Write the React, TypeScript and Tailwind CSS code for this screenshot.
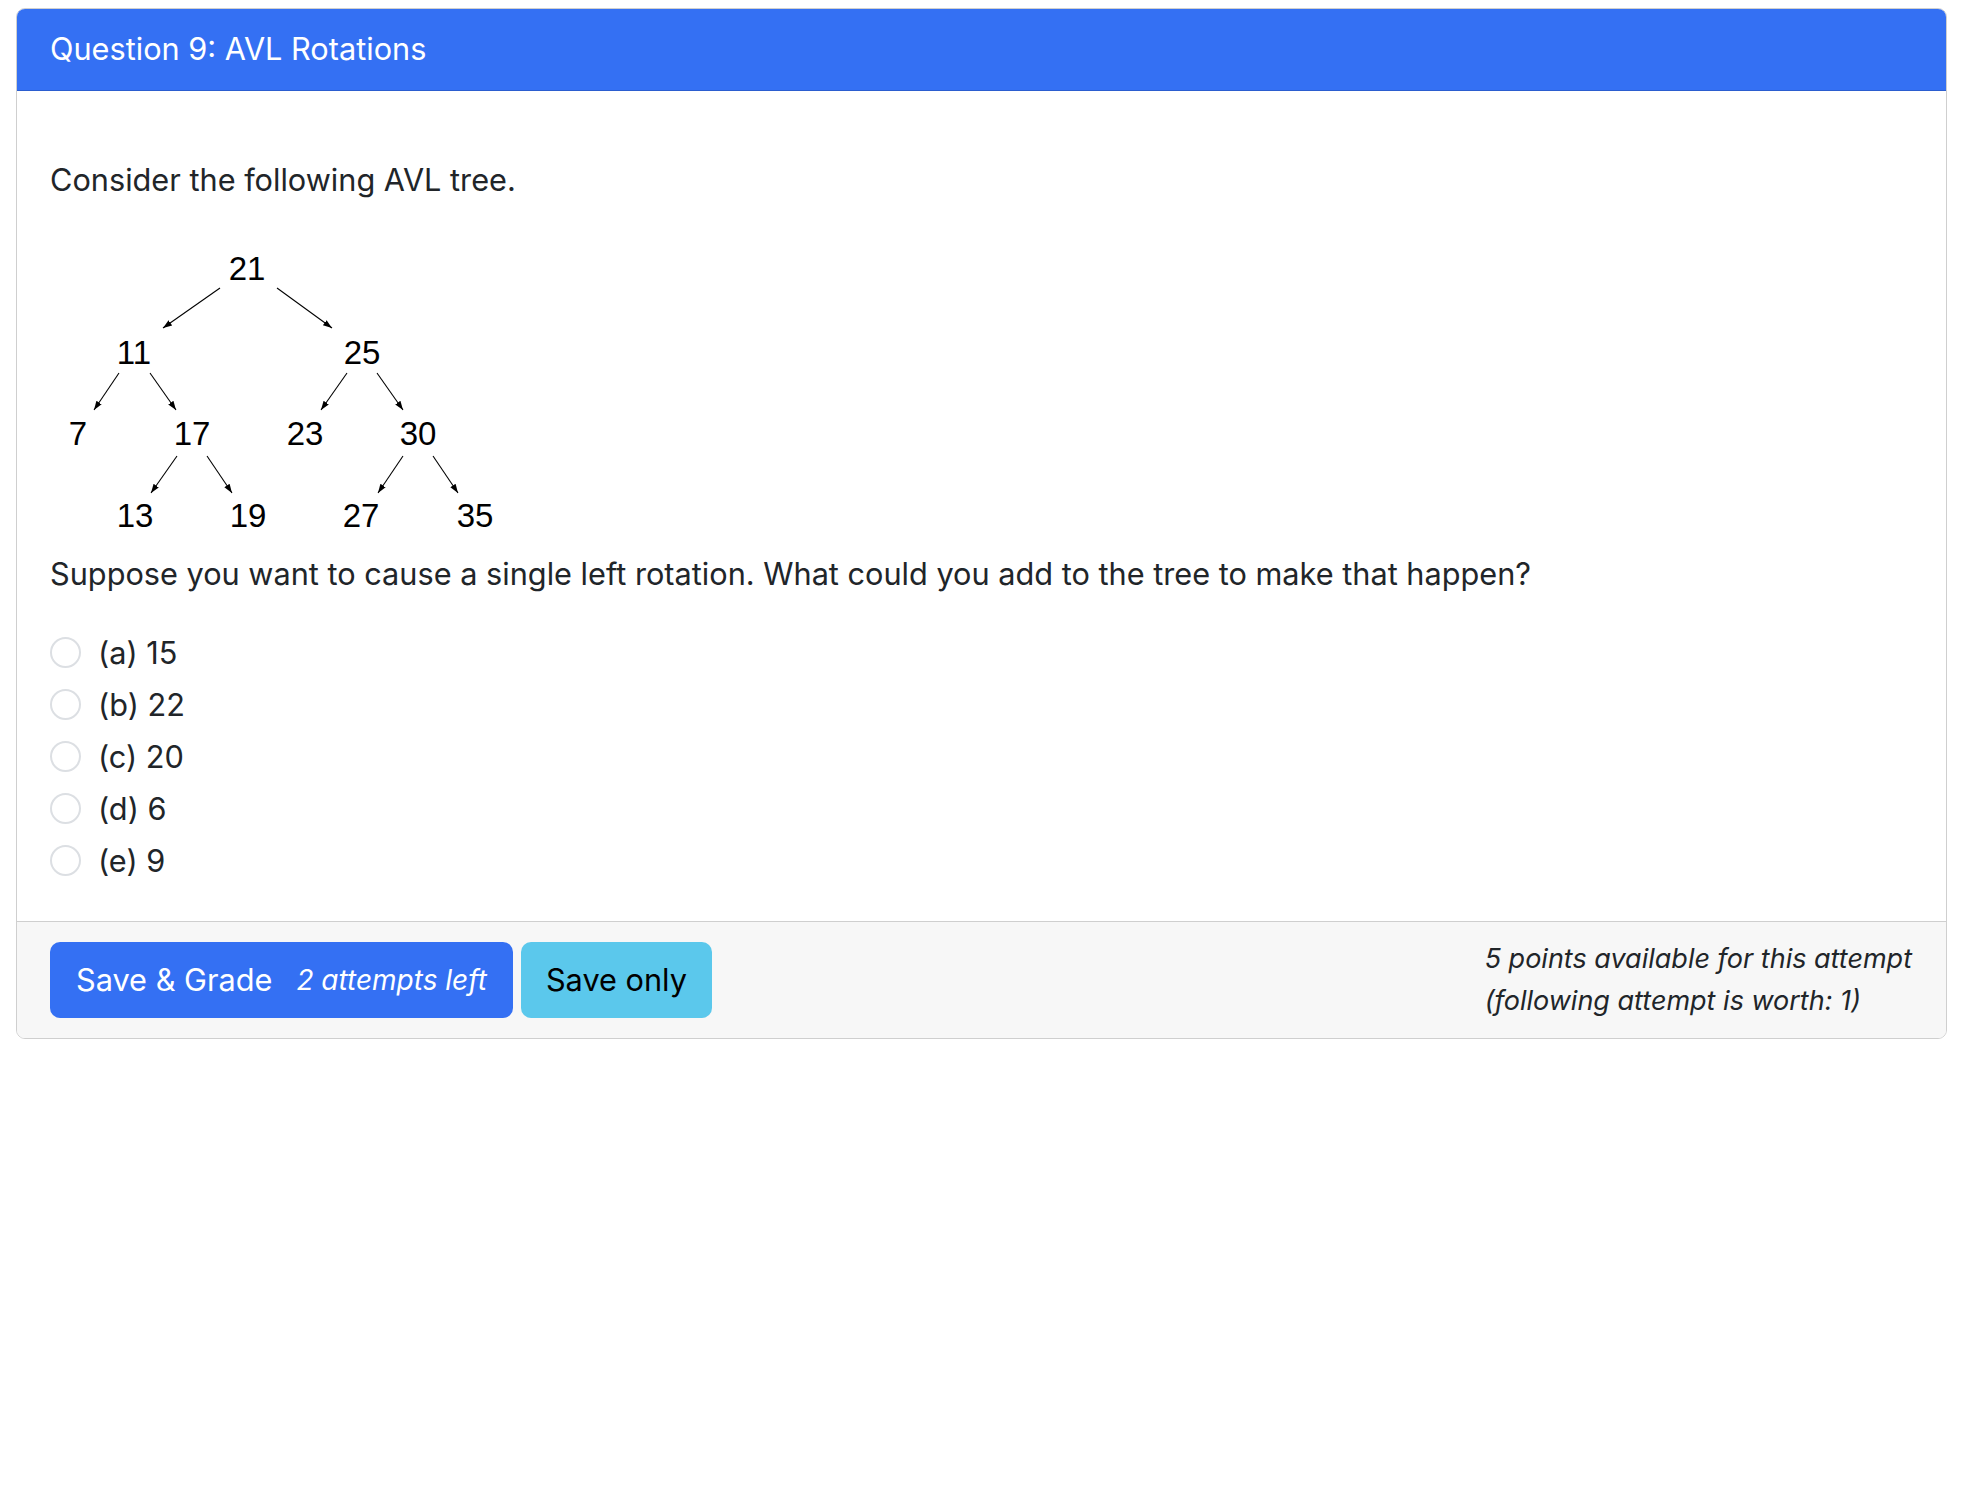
import React from "react";

const nodes: [string, number, number][] = [
  ["21", 197, 46],
  ["11", 84, 130],
  ["25", 312, 130],
  ["7", 28, 211],
  ["17", 142, 211],
  ["23", 255, 211],
  ["30", 368, 211],
  ["13", 85, 293],
  ["19", 198, 293],
  ["27", 311, 293],
  ["35", 425, 293],
];

const edges: [number, number, number, number][] = [
  [170, 66, 113, 106],
  [227, 66, 282, 106],
  [69, 151, 44, 188],
  [100, 151, 126, 188],
  [297, 151, 271, 188],
  [327, 151, 353, 188],
  [127, 234, 101, 271],
  [157, 234, 182, 271],
  [353, 234, 328, 271],
  [383, 234, 408, 271],
];

const options = ["(a) 15", "(b) 22", "(c) 20", "(d) 6", "(e) 9"];

function AvlTree() {
  return (
    <svg width="480" height="329" viewBox="0 0 480 329" className="block">
      <defs>
        <marker id="arrow" viewBox="0 0 10 10" refX="10" refY="5" markerWidth="9" markerHeight="9" orient="auto" markerUnits="userSpaceOnUse">
          <path d="M0 1.5 L10 5 L0 8.5 Z" fill="#000" />
        </marker>
      </defs>
      {edges.map(([x1, y1, x2, y2], i) => (
        <line key={i} x1={x1} y1={y1} x2={x2} y2={y2} stroke="#000" strokeWidth="1.1" markerEnd="url(#arrow)" />
      ))}
      {nodes.map(([label, x, y]) => (
        <text key={label} x={x} y={y} textAnchor="middle" dominantBaseline="central"
          fontFamily="'Liberation Sans', Arial, sans-serif" fontSize="33" fill="#000">
          {label}
        </text>
      ))}
    </svg>
  );
}

export default function App() {
  return (
    <div className="min-h-screen bg-white pl-[16px] pr-[25px] pt-[8px] text-[30.7px] text-[#212529]" style={{ fontFamily: "Inter, 'Noto Sans', sans-serif" }}>
      <div className="border border-[#cfcfcf] rounded-[9px] overflow-hidden">

        {/* Header */}
        <div className="h-[82px] bg-[#3470f3] border-b border-[#2b5dcf] px-[33px] flex items-center">
          <h2 className="text-white text-[30.7px] font-normal leading-none">Question 9: AVL Rotations</h2>
        </div>

        {/* Body */}
        <div className="px-[33px] pt-[66px] pb-[35px]">
          <p className="leading-[45px] mb-[20px]">Consider the following AVL tree.</p>
          <AvlTree />
          <p className="leading-[45px] mb-[30px]">
            Suppose you want to cause a single left rotation. What could you add to the tree to make that happen?
          </p>
          <div className="flex flex-col">
            {options.map(opt => (
              <label key={opt} className="h-[52px] flex items-center gap-[17px]">
                <span className="w-[31px] h-[31px] rounded-full border-2 border-[#dcdfe3] bg-white flex-shrink-0" />
                <span className="leading-[45px]">{opt}</span>
              </label>
            ))}
          </div>
        </div>

        {/* Footer */}
        <div className="h-[117px] bg-[#f7f7f7] border-t border-[#cfcfcf] pl-[33px] pr-[34px] flex items-center justify-between">
          <div className="flex items-center gap-[8px]">
            <button className="h-[76px] px-[26px] rounded-[10px] bg-[#3470f3] text-white text-[30.7px] flex items-center gap-[24px]">
              <span>Save &amp; Grade</span>
              <span className="italic text-[28px]">2 attempts left</span>
            </button>
            <button className="h-[76px] px-[25px] rounded-[10px] bg-[#5bc8ec] text-black text-[30.7px]">
              Save only
            </button>
          </div>
          <div className="italic text-[27px] leading-[42px] text-[#212529]">
            <div>5 points available for this attempt</div>
            <div>(following attempt is worth: 1)</div>
          </div>
        </div>
      </div>
    </div>
  );
}
